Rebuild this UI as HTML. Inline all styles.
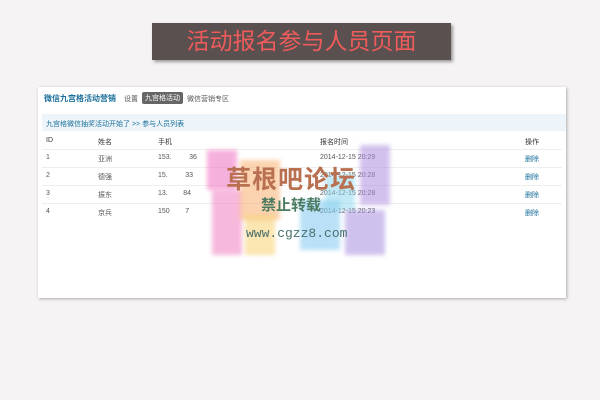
<!DOCTYPE html>
<html><head><meta charset="utf-8"><style>
body{margin:0;width:600px;height:400px;background:#f6f3f4;font-family:"Liberation Sans","Noto Sans CJK SC",sans-serif;position:relative;overflow:hidden}
.ban{position:absolute;left:152px;top:23px;width:299px;height:37px;background:#5b5050;box-shadow:2px 2px 3px #999;color:#ef5b5b;font-size:23px;text-align:center;line-height:37px;letter-spacing:0px}
.pan{position:absolute;left:38px;top:87px;width:528px;height:211px;background:#fff;box-shadow:1px 1px 3px #aaa}
.t{position:absolute;font-size:7px;color:#555;white-space:nowrap}
.b{color:#1a6f9a;font-weight:bold}
.bar{position:absolute;left:4px;top:27px;width:524px;height:17px;background:#eef5fa}
.ln{position:absolute;left:4px;width:520px;height:1px;background:#eee}
.wm{position:absolute;filter:blur(2px);opacity:.55}
</style></head><body>
<div class="ban">活动报名参与人员页面</div>
<div class="pan">
<div class="t b" style="left:6px;top:6px;font-size:8px">微信九宫格活动营销</div>
<div class="t" style="left:86px;top:7px">设置</div>
<div class="t" style="left:104px;top:5px;background:#666;color:#fff;padding:1px 3px;border-radius:2px">九宫格活动</div>
<div class="t" style="left:149px;top:7px">微信营销专区</div>
<div class="bar"></div>
<div class="t b" style="left:8px;top:32px;font-weight:normal">九宫格微信抽奖活动开始了 &gt;&gt; 参与人员列表</div>
<div class="t" style="left:8px;top:50px;color:#333">ID</div><div class="t" style="left:60px;top:50px;color:#333">姓名</div><div class="t" style="left:120px;top:50px;color:#333">手机</div><div class="t" style="left:282px;top:50px;color:#333">报名时间</div><div class="t" style="left:487px;top:50px;color:#333">操作</div>
<div class="ln" style="top:62px"></div>
<div class="t" style="left:8px;top:67px">1</div><div class="t" style="left:60px;top:67px">亚洲</div><div class="t" style="left:120px;top:67px">153.&nbsp;&nbsp;&nbsp;&nbsp;&nbsp;&nbsp;&nbsp;&nbsp;&nbsp;36</div><div class="t" style="left:282px;top:67px">2014-12-15 20:29</div><div class="t b" style="left:487px;top:67px;font-weight:normal">删除</div>
<div class="ln" style="top:80px"></div>
<div class="t" style="left:8px;top:85px">2</div><div class="t" style="left:60px;top:85px">德强</div><div class="t" style="left:120px;top:85px">15.&nbsp;&nbsp;&nbsp;&nbsp;&nbsp;&nbsp;&nbsp;&nbsp;&nbsp;33</div><div class="t" style="left:282px;top:85px">2014-12-15 20:28</div><div class="t b" style="left:487px;top:85px;font-weight:normal">删除</div>
<div class="ln" style="top:98px"></div>
<div class="t" style="left:8px;top:103px">3</div><div class="t" style="left:60px;top:103px">振东</div><div class="t" style="left:120px;top:103px">13.&nbsp;&nbsp;&nbsp;&nbsp;&nbsp;&nbsp;&nbsp;&nbsp;84</div><div class="t" style="left:282px;top:103px">2014-12-15 20:28</div><div class="t b" style="left:487px;top:103px;font-weight:normal">删除</div>
<div class="ln" style="top:116px"></div>
<div class="t" style="left:8px;top:121px">4</div><div class="t" style="left:60px;top:121px">京兵</div><div class="t" style="left:120px;top:121px">150&nbsp;&nbsp;&nbsp;&nbsp;&nbsp;&nbsp;&nbsp;&nbsp;7</div><div class="t" style="left:282px;top:121px">2014-12-15 20:23</div><div class="t b" style="left:487px;top:121px;font-weight:normal">删除</div>
</div>
<div class="wm" style="left:207px;top:150px;width:30px;height:40px;background:#f070c0"></div>
<div class="wm" style="left:212px;top:190px;width:30px;height:65px;background:#f080c0"></div>
<div class="wm" style="left:240px;top:160px;width:40px;height:60px;background:#f8b070"></div>
<div class="wm" style="left:245px;top:215px;width:30px;height:40px;background:#f8d070"></div>
<div class="wm" style="left:300px;top:200px;width:40px;height:50px;background:#80c8f0"></div>
<div class="wm" style="left:345px;top:210px;width:40px;height:45px;background:#a890e0"></div>
<div class="wm" style="left:360px;top:145px;width:30px;height:60px;background:#b090e0"></div>
<div class="wm" style="left:325px;top:175px;width:30px;height:35px;background:#90d8f0"></div>
<div style="position:absolute;left:226px;top:160px;font-size:25px;font-weight:bold;color:#b87050;letter-spacing:1px">草根吧论坛</div>
<div style="position:absolute;left:261px;top:194px;font-size:15px;font-weight:bold;color:#4a7a60">禁止转载</div>
<div style="position:absolute;left:246px;top:226px;font-size:13px;color:#4a7070;font-family:'Liberation Mono',monospace">www.cgzz8.com</div>
</body></html>
